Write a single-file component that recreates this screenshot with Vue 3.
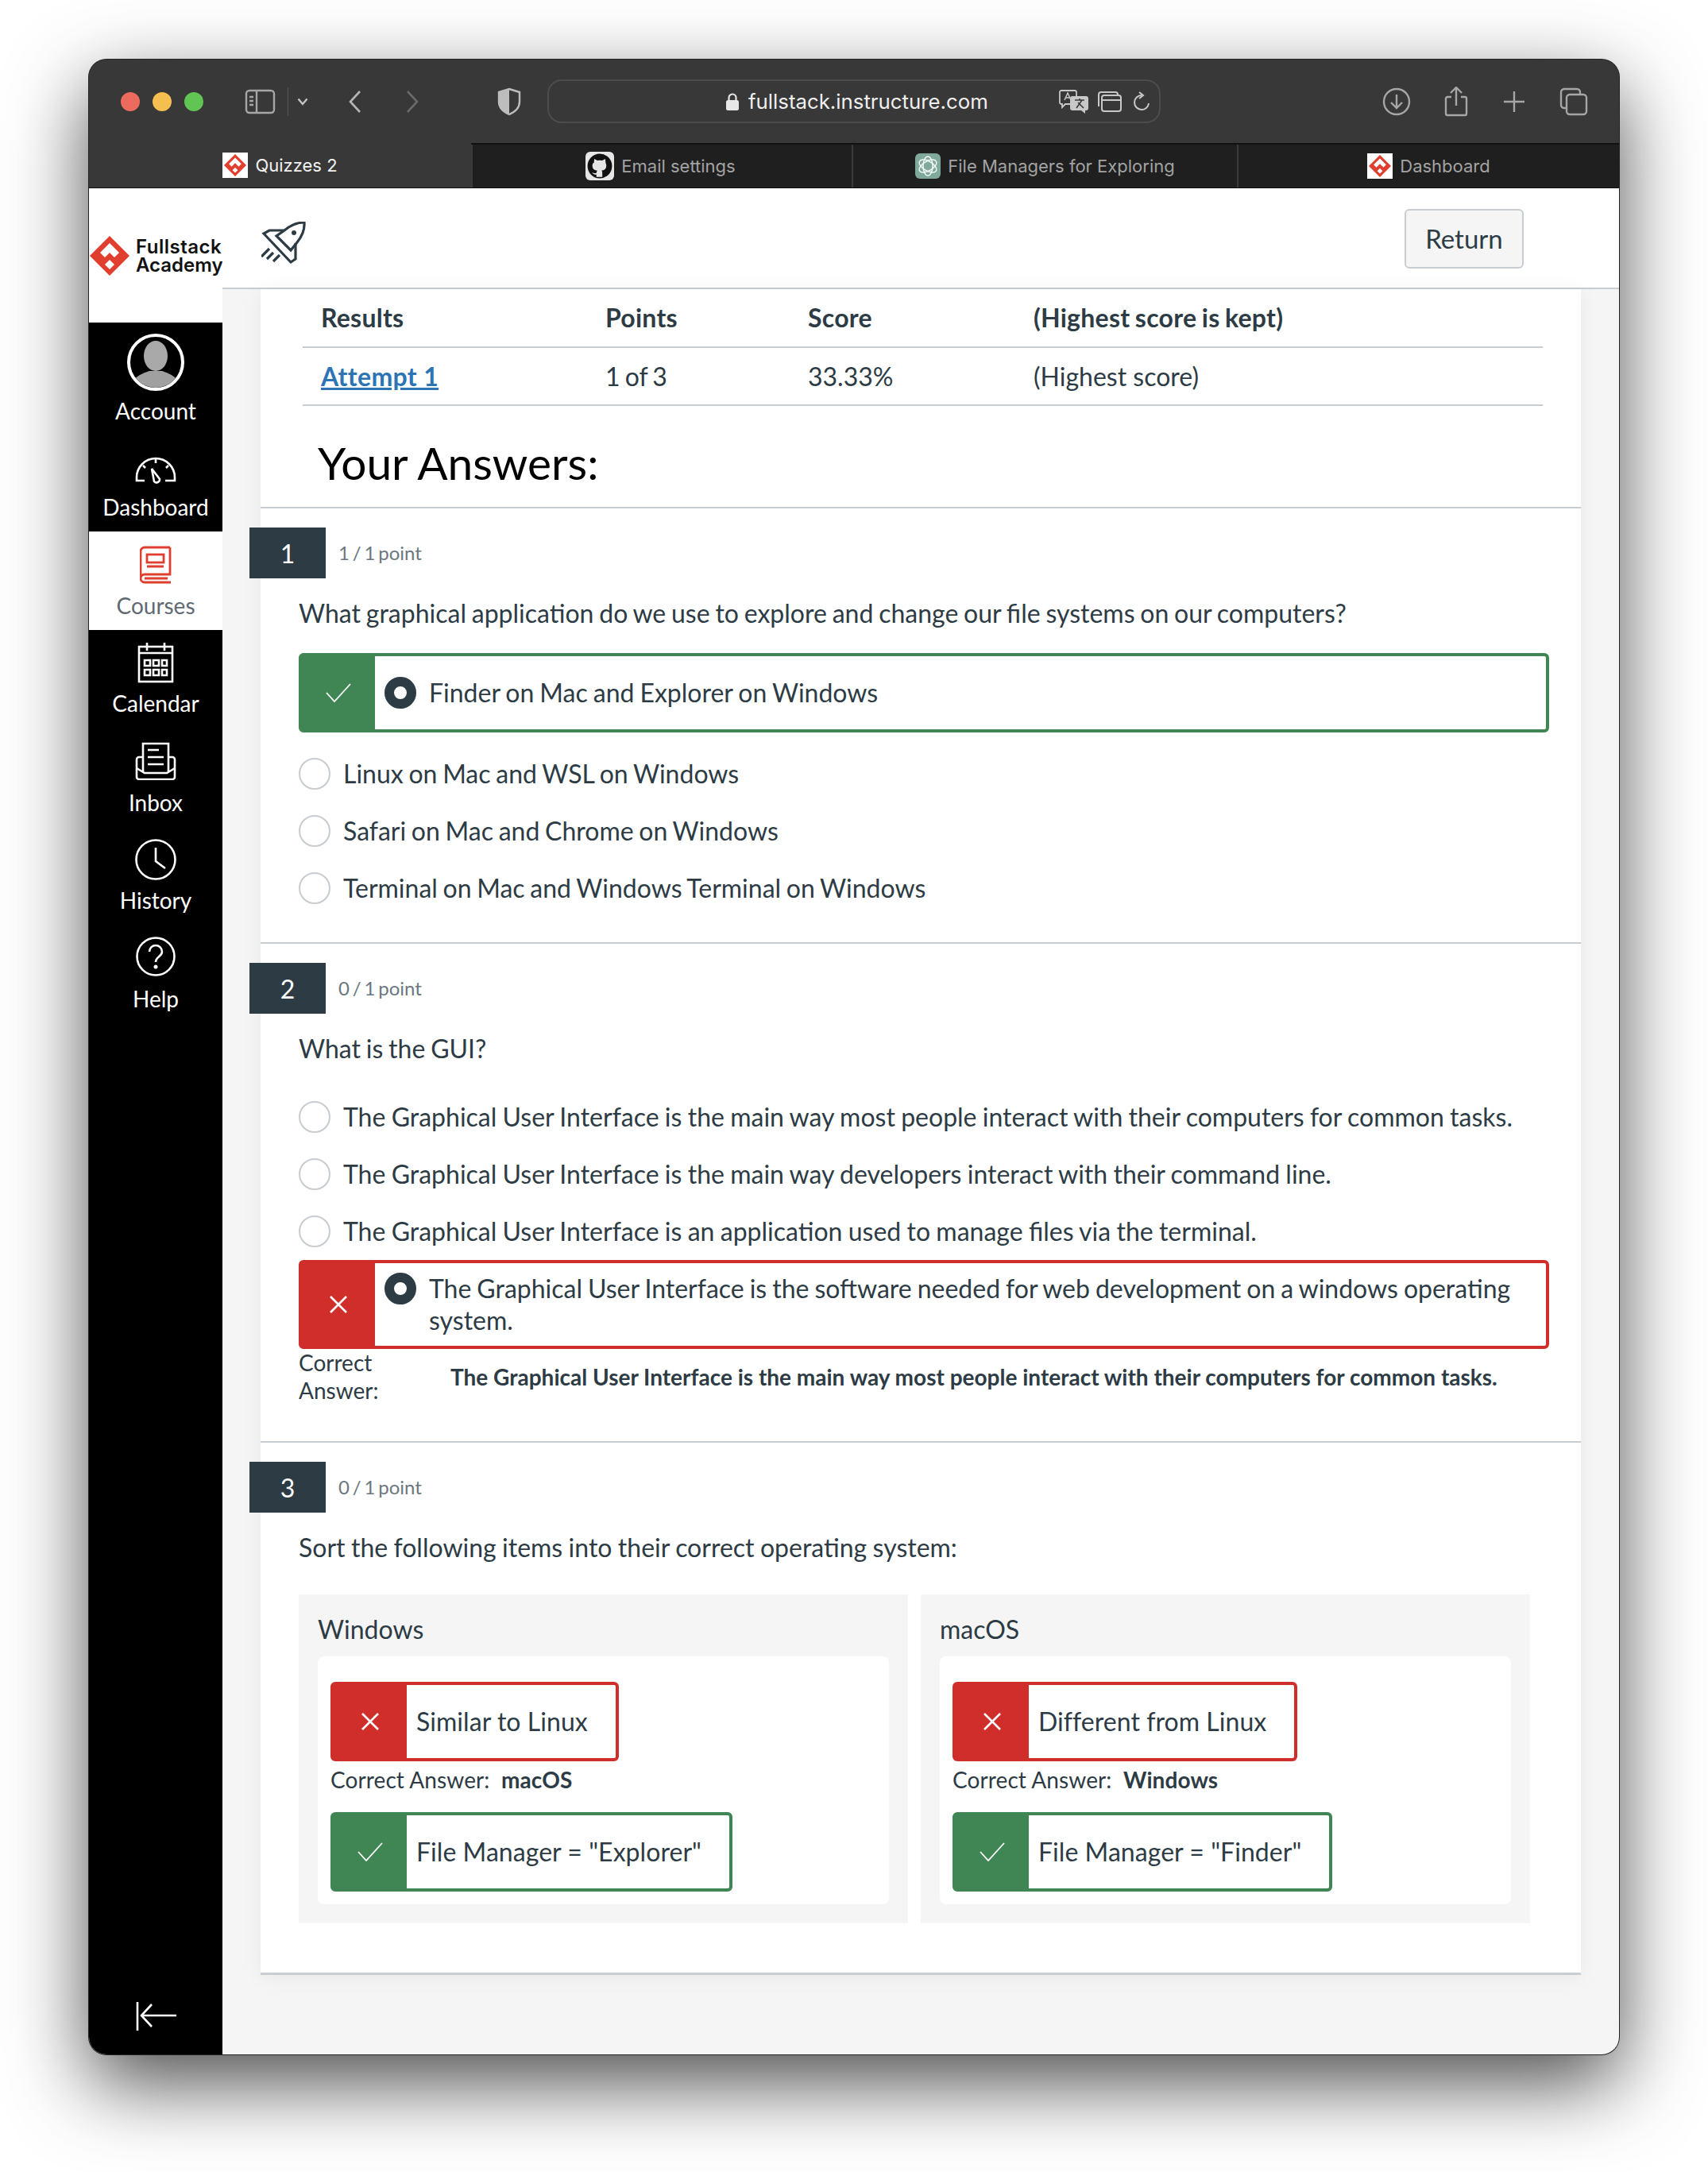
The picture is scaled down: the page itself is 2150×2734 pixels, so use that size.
<template>
  <div class="page">
    <div class="window">
      <div class="toolbar">
        <div class="lights">
          <span class="light red"></span>
          <span class="light yellow"></span>
          <span class="light green"></span>
        </div>
        <svg class="tb-sidebar" width="40" height="32" viewBox="0 0 40 32" fill="none" stroke="#a6a6a6" stroke-width="2.4">
          <rect x="2" y="2" width="35" height="28" rx="4" />
          <path d="M15 2v28M6 10h5M6 15h5M6 20h5" />
        </svg>
        <span class="tb-sep"></span>
        <svg class="tb-caret" width="14" height="10" viewBox="0 0 14 10" fill="none" stroke="#c4c4c4" stroke-width="2.4">
          <path d="M1.5 1.5 7 8l5.5-6.5" />
        </svg>
        <svg class="tb-back" width="18" height="30" viewBox="0 0 18 30" fill="none" stroke="#b5b5b5" stroke-width="2.6">
          <path d="M15 2 3 15l12 13" />
        </svg>
        <svg class="tb-forward" width="18" height="30" viewBox="0 0 18 30" fill="none" stroke="#6a6a6a" stroke-width="2.6">
          <path d="M3 2l12 13L3 28" />
        </svg>
        <svg class="tb-shield" width="30" height="36" viewBox="0 0 30 36">
          <path d="M15 2 28 6v12c0 8-6 13-13 16C8 31 2 26 2 18V6z" fill="none" stroke="#bdbdbd" stroke-width="2.4" />
          <path d="M15 2 2 6v12c0 8 6 13 13 16z" fill="#bdbdbd" />
        </svg>
        <div class="urlbar">
          <svg class="lock" width="18" height="24" viewBox="0 0 18 24">
            <path d="M4.5 11V7a4.5 4.5 0 0 1 9 0v4" fill="none" stroke="#e8e8e8" stroke-width="2.2" />
            <rect x="1" y="10" width="16" height="13" rx="2.5" fill="#e8e8e8" />
          </svg>
          <span class="url">fullstack.instructure.com</span>
          <svg class="url-translate" width="38" height="30" viewBox="0 0 38 30">
            <path d="M3 1h17a2 2 0 0 1 2 2v13a2 2 0 0 1-2 2H8l-4 4v-4H3a2 2 0 0 1-2-2V3a2 2 0 0 1 2-2z" fill="#383838" stroke="#c8c8c8" stroke-width="1.8" />
            <path d="M17 8h17a3 3 0 0 1 3 3v12a3 3 0 0 1-3 3h-1v4l-5-4H17a3 3 0 0 1-3-3V11a3 3 0 0 1 3-3z" fill="#c8c8c8" />
            <path d="M7 13 11 4l4 9M8.500 10h5" fill="none" stroke="#c8c8c8" stroke-width="1.500" />
            <path d="M20 13h12M26 11v2M22 23l7-10M31 23l-7-7" fill="none" stroke="#383838" stroke-width="1.600" />
          </svg>
          <svg class="url-tabs" width="30" height="26" viewBox="0 0 30 26" fill="none" stroke="#c8c8c8" stroke-width="2">
            <rect x="5" y="5" width="24" height="20" rx="3" />
            <path d="M1 19V4a3 3 0 0 1 3-3h18a3 3 0 0 1 3 3v1M5 11h24M9 8h.1M13 8h.1M17 8h.1" />
          </svg>
          <svg class="url-reload" width="22" height="26" viewBox="0 0 22 26" fill="none" stroke="#c8c8c8" stroke-width="2">
            <path d="M11 5a9 9 0 1 0 9 10" />
            <path d="M8 1l5 4-5 4" />
          </svg>
        </div>
        <svg class="tb-down" width="36" height="36" viewBox="0 0 36 36" fill="none" stroke="#a6a6a6" stroke-width="2.400">
          <circle cx="18" cy="18" r="16" />
          <path d="M18 9v17M11 19l7 7 7-7" />
        </svg>
        <svg class="tb-share" width="30" height="38" viewBox="0 0 30 38" fill="none" stroke="#a6a6a6" stroke-width="2.400">
          <path d="M9 13H4a2 2 0 0 0-2 2v19a2 2 0 0 0 2 2h22a2 2 0 0 0 2-2V15a2 2 0 0 0-2-2h-5M15 24V2M8 8l7-7 7 7" />
        </svg>
        <svg class="tb-plus" width="28" height="28" viewBox="0 0 28 28" fill="none" stroke="#a6a6a6" stroke-width="2.400">
          <path d="M14 1v26M1 14h26" />
        </svg>
        <svg class="tb-copy" width="36" height="36" viewBox="0 0 36 36" fill="none" stroke="#a6a6a6" stroke-width="2.400">
          <rect x="9" y="9" width="25" height="25" rx="4" />
          <path d="M9 26H6a4 4 0 0 1-4-4V6a4 4 0 0 1 4-4h16a4 4 0 0 1 4 4v3" />
        </svg>
      </div>

      <div class="tabs">
        <div class="tab active">
          <span class="favicon fav-white">
            <svg width="28" height="32" viewBox="0 0 50 50">
              <path d="M25 0 50 25 25 50 0 25z" fill="#e03e2f" />
              <path d="M25 8 39 22 33 28 25 20 17 28 11 22z" fill="#fff" />
              <path d="M25 30 31 36 25 42 19 36z" fill="#fff" />
            </svg>
          </span>
          <span>Quizzes 2</span>
        </div>
        <div class="tab">
          <span class="favicon fav-github">
            <svg width="34" height="34" viewBox="0 0 32 32">
              <circle cx="16" cy="16" r="14.500" fill="#111" />
              <path d="M9 12.500 9.500 7.500 13 9.500a11 11 0 0 1 6 0l3.500-2 .5 5c1.200 2 1 6-1 7.500-1 .8-2.500 1.200-4 1.300.7.700 1 1.500 1 2.700v5h-7v-3c-2.500.5-4-.5-5-2.500 1 .3 3 1.700 5 .7.100-1 .3-2 1-2.900-1.500-.1-3-.5-4-1.300-2-1.500-2.200-5.500-1-7.500z" fill="#e6e6e6" />
            </svg>
          </span>
          <span>Email settings</span>
        </div>
        <div class="tab">
          <span class="favicon fav-gpt">
            <svg width="30" height="30" viewBox="0 0 30 30" fill="none" stroke="#f2f7f5" stroke-width="1.500">
              <ellipse cx="15" cy="15" rx="6" ry="12" />
              <ellipse cx="15" cy="15" rx="6" ry="12" transform="rotate(60 15 15)" />
              <ellipse cx="15" cy="15" rx="6" ry="12" transform="rotate(120 15 15)" />
            </svg>
          </span>
          <span>File Managers for Exploring</span>
        </div>
        <div class="tab">
          <span class="favicon fav-white">
            <svg width="28" height="32" viewBox="0 0 50 50">
              <path d="M25 0 50 25 25 50 0 25z" fill="#e03e2f" />
              <path d="M25 8 39 22 33 28 25 20 17 28 11 22z" fill="#fff" />
              <path d="M25 30 31 36 25 42 19 36z" fill="#fff" />
            </svg>
          </span>
          <span>Dashboard</span>
        </div>
      </div>

      <div class="app">
        <aside class="side">
          <div class="brand">
            <svg width="50" height="50" viewBox="0 0 50 50">
              <path d="M25 0 50 25 25 50 0 25z" fill="#e03e2f" />
              <path d="M25 9 37 21 31 27 25 21 19 27 13 21z" fill="#fff" />
              <path d="M25 30 31 36 25 42 19 36z" fill="#fff" />
            </svg>
            <div class="brand-name">
              <div class="brand-top">Fullstack</div>
              <div>Academy</div>
            </div>
          </div>
          <nav class="nav">
            <a class="nav-item account">
              <span class="avatar">
                <svg width="64" height="64" viewBox="0 0 64 64">
                  <ellipse cx="32" cy="24" rx="15" ry="19" fill="#a9a9a9" />
                  <path d="M2 64c0-14 14-18 22-21h16c8 3 22 7 22 21z" fill="#a0a0a0" />
                </svg>
              </span>
              Account
            </a>
            <a class="nav-item raised">
              <svg width="52" height="36" viewBox="0 0 52 36" fill="none" stroke="#fff" stroke-width="2.600">
                <path d="M12 32H2V28a24 24 0 0 1 48 0v4H38" />
                <path d="M26 5v5M10 13l3 3M42 13l-3 3" />
                <path d="M21 17l10 13a4 4 0 0 1-7 3z" />
              </svg>
              Dashboard
            </a>
            <a class="nav-item current">
              <svg width="40" height="48" viewBox="0 0 40 48" fill="none" stroke="#e03e2f" stroke-width="2.800">
                <path d="M38 2H6a5 5 0 0 0-5 5v34a5 5 0 0 0 5 5h33M38 2v34H6a5 5 0 0 0-5 5" />
                <rect x="9" y="11" width="21" height="10" />
                <path d="M9 26h21M6 41h29" />
              </svg>
              Courses
            </a>
            <a class="nav-item">
              <svg width="46" height="52" viewBox="0 0 46 52" fill="none" stroke="#fff" stroke-width="2.600">
                <rect x="2" y="6" width="42" height="44" />
                <path d="M12 1v10M34 1v10M2 14h42" />
                <path d="M9 23h7v7H9zM20 23h7v7h-7zM31 23h6v7h-6zM9 35h7v7H9zM20 35h7v7h-7zM31 35h6v7h-6z" />
              </svg>
              Calendar
            </a>
            <a class="nav-item inbox">
              <svg width="52" height="48" viewBox="0 0 52 48" fill="none" stroke="#fff" stroke-width="2.600">
                <path d="M10 37V2h32v35M16 10h14M16 19h20M16 28h20" />
                <path d="M10 19H5a3 3 0 0 0-3 3v22a3 3 0 0 0 3 3h42a3 3 0 0 0 3-3V22a3 3 0 0 0-3-3h-5" />
                <path d="M2 33l10 6h28l10-6" />
              </svg>
              Inbox
            </a>
            <a class="nav-item">
              <svg width="52" height="52" viewBox="0 0 52 52" fill="none" stroke="#fff" stroke-width="2.600">
                <circle cx="26" cy="26" r="24.500" />
                <path d="M26 11v17l12 9" />
              </svg>
              History
            </a>
            <a class="nav-item help">
              <svg width="50" height="50" viewBox="0 0 50 50" fill="none" stroke="#fff" stroke-width="2.600">
                <circle cx="25" cy="25" r="23.500" />
                <path d="M17 19c0-5 4-8 8-8s8 3 8 8c0 6-8 6-8 13" />
                <circle cx="25" cy="38" r="2.500" fill="#fff" stroke="none" />
              </svg>
              Help
            </a>
          </nav>
          <div class="collapse">
            <svg width="52" height="38" viewBox="0 0 52 38" fill="none" stroke="#fff" stroke-width="2.600">
              <path d="M2 1v36M51 18H9M20 4 7 18l13 14" />
            </svg>
          </div>
        </aside>

        <main class="main">
          <header class="topbar">
            <svg class="rocket" width="56" height="54" viewBox="0 0 56 54" fill="none" stroke="#2d3b45" stroke-width="3.200">
              <path d="M29 11Q41 1 54 1 55 14 45 26L37 36 19 18z" />
              <path d="M29 11H10L3 15l34 36 6-4V27" />
              <path d="M0 44 10 34M7 47l8-8M15 50l8-8" />
              <circle cx="41" cy="14" r="3" fill="#2d3b45" stroke="none" />
            </svg>
            <button class="return">Return</button>
          </header>

          <div class="scroll">
            <section class="card">
              <table class="results">
                <thead>
                  <tr>
                    <th class="col-a">Results</th>
                    <th class="col-b">Points</th>
                    <th class="col-c">Score</th>
                    <th>(Highest score is kept)</th>
                  </tr>
                </thead>
                <tbody>
                  <tr>
                    <td><a class="attempt">Attempt 1</a></td>
                    <td class="tight">1 of 3</td>
                    <td>33.33%</td>
                    <td>(Highest score)</td>
                  </tr>
                </tbody>
              </table>
              <h1 class="title">Your Answers:</h1>

              <div class="question q1">
                <div class="q-head">
                  <span class="q-num">1</span>
                  <span class="q-points">1 / 1 point</span>
                </div>
                <p class="q-text">What graphical application do we use to explore and change our file systems on our computers?</p>
                <div class="answer good">
                  <span class="mark">
                    <svg width="32" height="24" viewBox="0 0 32 24" fill="none" stroke="#fff" stroke-width="1.800"><path d="M1 12l10 11L31 1" /></svg>
                  </span>
                  <span class="radio on"></span>
                  <span class="answer-text">Finder on Mac and Explorer on Windows</span>
                </div>
                <div class="options first">
                  <div v-for="o in q1Options" :key="o" class="option"><span class="radio"></span><span class="option-text">{{ o }}</span></div>
                </div>
              </div>

              <div class="question q2">
                <div class="q-head">
                  <span class="q-num">2</span>
                  <span class="q-points">0 / 1 point</span>
                </div>
                <p class="q-text">What is the GUI?</p>
                <div class="options">
                  <div v-for="o in q2Options" :key="o" class="option"><span class="radio"></span><span class="option-text">{{ o }}</span></div>
                </div>
                <div class="answer bad multi">
                  <span class="mark">
                    <svg width="22" height="22" viewBox="0 0 22 22" fill="none" stroke="#fff" stroke-width="2.600"><path d="M1 1l20 20M21 1 1 21" /></svg>
                  </span>
                  <span class="radio on"></span>
                  <span class="answer-text">The Graphical User Interface is the software needed for web development on a windows operating system.</span>
                </div>
                <div class="correct">
                  <span class="correct-label">Correct Answer:</span>
                  <strong>The Graphical User Interface is the main way most people interact with their computers for common tasks.</strong>
                </div>
              </div>

              <div class="question q3">
                <div class="q-head">
                  <span class="q-num">3</span>
                  <span class="q-points">0 / 1 point</span>
                </div>
                <p class="q-text">Sort the following items into their correct operating system:</p>
                <div class="sort">
                  <div v-for="g in groups" :key="g.name" class="group">
                    <div class="group-name">{{ g.name }}</div>
                    <div class="group-body">
                      <div class="chip-row">
                        <div class="answer bad chip">
                          <span class="mark">
                            <svg width="22" height="22" viewBox="0 0 22 22" fill="none" stroke="#fff" stroke-width="2.600"><path d="M1 1l20 20M21 1 1 21" /></svg>
                          </span>
                          <span class="chip-text">{{ g.wrong }}</span>
                        </div>
                      </div>
                      <div class="chip-answer">Correct Answer:&nbsp; <strong>{{ g.correct }}</strong></div>
                      <div class="chip-row">
                        <div class="answer good chip">
                          <span class="mark">
                            <svg width="32" height="24" viewBox="0 0 32 24" fill="none" stroke="#fff" stroke-width="1.800"><path d="M1 12l10 11L31 1" /></svg>
                          </span>
                          <span class="chip-text">{{ g.right }}</span>
                        </div>
                      </div>
                    </div>
                  </div>
                </div>
              </div>
            </section>
          </div>
        </main>
      </div>
    </div>
  </div>
</template>

<script setup>
const q1Options = [
  'Linux on Mac and WSL on Windows',
  'Safari on Mac and Chrome on Windows',
  'Terminal on Mac and Windows Terminal on Windows'
]

const q2Options = [
  'The Graphical User Interface is the main way most people interact with their computers for common tasks.',
  'The Graphical User Interface is the main way developers interact with their command line.',
  'The Graphical User Interface is an application used to manage files via the terminal.'
]

const groups = [
  { name: 'Windows', wrong: 'Similar to Linux', correct: 'macOS', right: 'File Manager = "Explorer"' },
  { name: 'macOS', wrong: 'Different from Linux', correct: 'Windows', right: 'File Manager = "Finder"' }
]
</script>

<style>
html, body {
  margin: 0;
  background: #fff;
}
</style>

<style scoped>
.page {
  width: 2150px;
  height: 2734px;
  padding: 75px 0 0 112px;
  box-sizing: border-box;
  overflow: hidden;
  font-family: Lato, "Liberation Sans", sans-serif;
  color: #2d3b45;
}
.window {
  width: 1926px;
  height: 2511px;
  border-radius: 22px;
  display: flex;
  flex-direction: column;
  background: #383838;
  box-shadow: 0 0 0 1px #222, 0 36px 100px 0 rgba(0, 0, 0, .7);
  overflow: hidden;
}

/* browser chrome */
.toolbar {
  height: 105px;
  flex: none;
  display: flex;
  align-items: center;
  background: #383838;
  padding: 0 0 0 40px;
  box-sizing: border-box;
}
.lights {
  display: flex;
  gap: 16px;
}
.light {
  width: 24px;
  height: 24px;
  border-radius: 50%;
}
.light.red { background: #ed6a5e; }
.light.yellow { background: #f5bf4f; }
.light.green { background: #61c554; }
.tb-sidebar { margin-left: 52px; }
.tb-sep {
  width: 1px;
  height: 36px;
  background: #555;
  margin-left: 14px;
}
.tb-caret { margin-left: 11px; }
.tb-back { margin-left: 50px; }
.tb-forward { margin-left: 54px; }
.tb-shield { margin-left: 98px; }
.urlbar {
  width: 772px;
  height: 55px;
  margin-left: 33px;
  border: 2px solid #4c4c4c;
  border-radius: 18px;
  box-sizing: border-box;
  display: flex;
  align-items: center;
  padding-left: 222px;
}
.lock { flex: none; }
.url {
  font-family: Inter, "Liberation Sans", sans-serif;
  font-size: 25.8px;
  color: #efefef;
  margin-left: 11px;
  white-space: nowrap;
  width: 303px;
}
.url-translate { margin-left: 88px; flex: none; }
.url-tabs { margin-left: 11px; flex: none; }
.url-reload { margin-left: 14px; flex: none; }
.tb-down { margin-left: 279px; }
.tb-share { margin-left: 42px; }
.tb-plus { margin-left: 44px; }
.tb-copy { margin-left: 43px; }

.tabs {
  height: 57px;
  flex: none;
  display: grid;
  grid-template-columns: 481px 479px 485px 1fr;
  border-top: 2px solid #111;
  border-bottom: 1px solid #111;
  box-sizing: border-box;
  background: #1f1f1f;
  font-family: Inter, "Liberation Sans", sans-serif;
  font-size: 22px;
  color: #a3a3a3;
}
.tab {
  display: flex;
  align-items: center;
  justify-content: center;
  gap: 9px;
  border-left: 2px solid #3a3a3a;
}
.tab:first-child { border-left: 0; }
.tab.active {
  background: #383838;
  color: #f2f2f2;
  margin-top: -2px;
}
.favicon {
  width: 32px;
  height: 32px;
  display: flex;
  align-items: center;
  justify-content: center;
  flex: none;
}
.fav-white { background: #fff; }
.fav-github {
  width: 36px;
  height: 36px;
  margin-left: -4px;
  background: #e6e6e6;
  border-radius: 6px;
}
.fav-gpt {
  background: #7ea99b;
  border-radius: 6px;
}

/* canvas app */
.app {
  flex: 1;
  display: flex;
  min-height: 0;
  background: #f5f5f5;
}
.side {
  width: 168px;
  flex: none;
  display: flex;
  flex-direction: column;
  background: #000;
}
.brand {
  height: 169px;
  flex: none;
  background: #fff;
  display: flex;
  align-items: center;
  gap: 8px;
  padding: 0 0 0 1px;
  box-sizing: border-box;
}
.brand svg { flex: none; }
.brand-name {
  font-family: Inter, "Liberation Sans", sans-serif;
  font-weight: 600;
  font-size: 24px;
  line-height: 23px;
  color: #111;
  white-space: nowrap;
}
.brand-top { letter-spacing: .5px; }
.nav {
  display: flex;
  flex-direction: column;
  color: #fff;
  font-size: 28px;
}
.nav-item {
  height: 123px;
  display: flex;
  flex-direction: column;
  align-items: center;
  justify-content: flex-end;
  gap: 8px;
  padding-bottom: 14px;
  box-sizing: border-box;
  line-height: 34px;
}
.nav-item.account {
  height: 140px;
  padding-bottom: 12px;
}
.nav-item.raised { gap: 12px; }
.nav-item.inbox { height: 125px; gap: 11px; }
.nav-item.help { gap: 11px; padding-bottom: 13px; }
.nav-item.current {
  height: 124px;
  gap: 10px;
  background: #fff;
  color: #5f6a72;
}
.avatar {
  width: 72px;
  height: 72px;
  border: 4px solid #fff;
  border-radius: 50%;
  box-sizing: border-box;
  overflow: hidden;
  display: block;
}
.avatar svg { display: block; }
.collapse {
  margin-top: auto;
  padding: 0 0 29px 59px;
}
.collapse svg { display: block; }

.main {
  flex: 1;
  min-width: 0;
  display: flex;
  flex-direction: column;
}
.topbar {
  height: 127px;
  flex: none;
  background: #fff;
  border-bottom: 2px solid #c7cdd1;
  box-sizing: border-box;
  display: flex;
  align-items: center;
  justify-content: space-between;
  padding: 0 120px 18px 49px;
}
.rocket { margin-top: 30px; }
.return {
  width: 150px;
  height: 75px;
  margin-top: 19px;
  background: #f5f5f5;
  border: 2px solid #c7cdd1;
  border-radius: 6px;
  font-family: inherit;
  font-size: 33px;
  color: #2d3b45;
  padding: 0;
}
.scroll {
  flex: 1;
  padding: 0 48px;
  min-height: 0;
}
.card {
  height: 2122px;
  box-sizing: border-box;
  background: #fff;
  border-bottom: 3px solid #c7cdd1;
  box-shadow: 0 2px 24px rgba(0, 0, 0, .06);
}

.results {
  width: 1561px;
  margin-left: 53px;
  border-collapse: collapse;
  font-size: 32px;
  table-layout: fixed;
}
.results th,
.results td {
  height: 73px;
  padding: 0 0 0 23px;
  text-align: left;
  border-bottom: 2px solid #c7cdd1;
  box-sizing: border-box;
}
.results th {
  font-weight: 700;
  letter-spacing: .25px;
  word-spacing: -1.5px;
  padding-bottom: 2px;
}
.tight { word-spacing: -2px; }
.col-a { width: 358px; }
.col-b { width: 255px; }
.col-c { width: 284px; }
.attempt {
  color: #2d74b4;
  font-weight: 700;
  letter-spacing: .35px;
  text-decoration: underline;
}
.title {
  margin: 0;
  padding-left: 72px;
  font-size: 56.800px;
  font-weight: 400;
  line-height: 142px;
  color: #000;
  border-bottom: 2px solid #c7cdd1;
  box-sizing: border-box;
  height: 129px;
}
.question {
  padding: 24px 40px 0 48px;
  border-bottom: 2px solid #c7cdd1;
  box-sizing: border-box;
}
.question.q1 { height: 548px; }
.question.q2 { height: 628px; }
.question.q3 { border-bottom: 0; }
.q-head {
  display: flex;
  align-items: center;
  gap: 16px;
  margin-left: -62px;
}
.q-num {
  width: 96px;
  height: 64px;
  background: #2d3b45;
  color: #fff;
  font-size: 32px;
  display: flex;
  align-items: center;
  justify-content: center;
}
.q-points {
  font-size: 24px;
  word-spacing: -2.300px;
  color: #6b7780;
  margin-bottom: 2px;
}
.q-text {
  margin: 24px 0 0;
  font-size: 32px;
  line-height: 40px;
  word-spacing: -1.400px;
}
.q1 .q-text { margin-bottom: 30px; }
.q2 .q-text { margin-bottom: 30px; }
.q3 .q-text { margin-bottom: 39px; word-spacing: -.8px; }

.options.first { margin-top: 16px; }
.option {
  height: 72px;
  display: flex;
  align-items: center;
  gap: 16px;
  font-size: 32px;
  word-spacing: -1.500px;
}
.q2 .option { word-spacing: -.9px; }
.option-text { margin-top: -2px; }
.radio {
  width: 40px;
  height: 40px;
  flex: none;
  box-sizing: border-box;
  border: 2px solid #c7cdd1;
  border-radius: 50%;
  background: #fff;
}
.radio.on { border: 12px solid #2d3b45; }

.answer {
  display: flex;
  align-items: center;
  border: 4px solid;
  border-radius: 6px;
  box-sizing: border-box;
  background: #fff;
  min-height: 100px;
  font-size: 32px;
  line-height: 40px;
}
.answer-text { word-spacing: -1.200px; }
.answer.good { border-color: #3f8654; }
.answer.bad { border-color: #cf2e2b; }
.mark {
  width: 93px;
  align-self: stretch;
  flex: none;
  margin-left: -1px;
  display: flex;
  align-items: center;
  justify-content: center;
}
.good .mark { background: #3f8654; }
.bad .mark { background: #cf2e2b; }
.answer .radio { margin: 0 16px 0 12px; }
.answer.multi {
  align-items: flex-start;
  padding: 12px 0;
}
.answer.multi .mark {
  margin: -12px 0 -12px -1px;
  align-self: auto;
  height: 104px;
}
.answer.multi .answer-text { padding-right: 30px; }

.correct {
  display: flex;
  align-items: center;
  gap: 91px;
  font-size: 28px;
  line-height: 35px;
}
.correct-label { width: 100px; flex: none; }

.sort {
  display: grid;
  grid-template-columns: 767px 767px;
  gap: 16px;
}
.group {
  height: 414px;
  padding: 0 24px;
  box-sizing: border-box;
  background: #f5f5f5;
}
.group-name {
  height: 78px;
  font-size: 32px;
  line-height: 88px;
}
.group-body {
  height: 312px;
  padding: 32px 16px 0;
  box-sizing: border-box;
  background: #fff;
  border-radius: 8px;
}
.chip-row { display: flex; }
.chip { height: 100px; }
.chip-text {
  padding: 0 35px 0 12px;
  white-space: nowrap;
  letter-spacing: .05px;
}
.chip-answer {
  height: 64px;
  padding-bottom: 19px;
  box-sizing: border-box;
  display: flex;
  align-items: center;
  font-size: 28px;
  letter-spacing: .1px;
  white-space: pre;
}
</style>
